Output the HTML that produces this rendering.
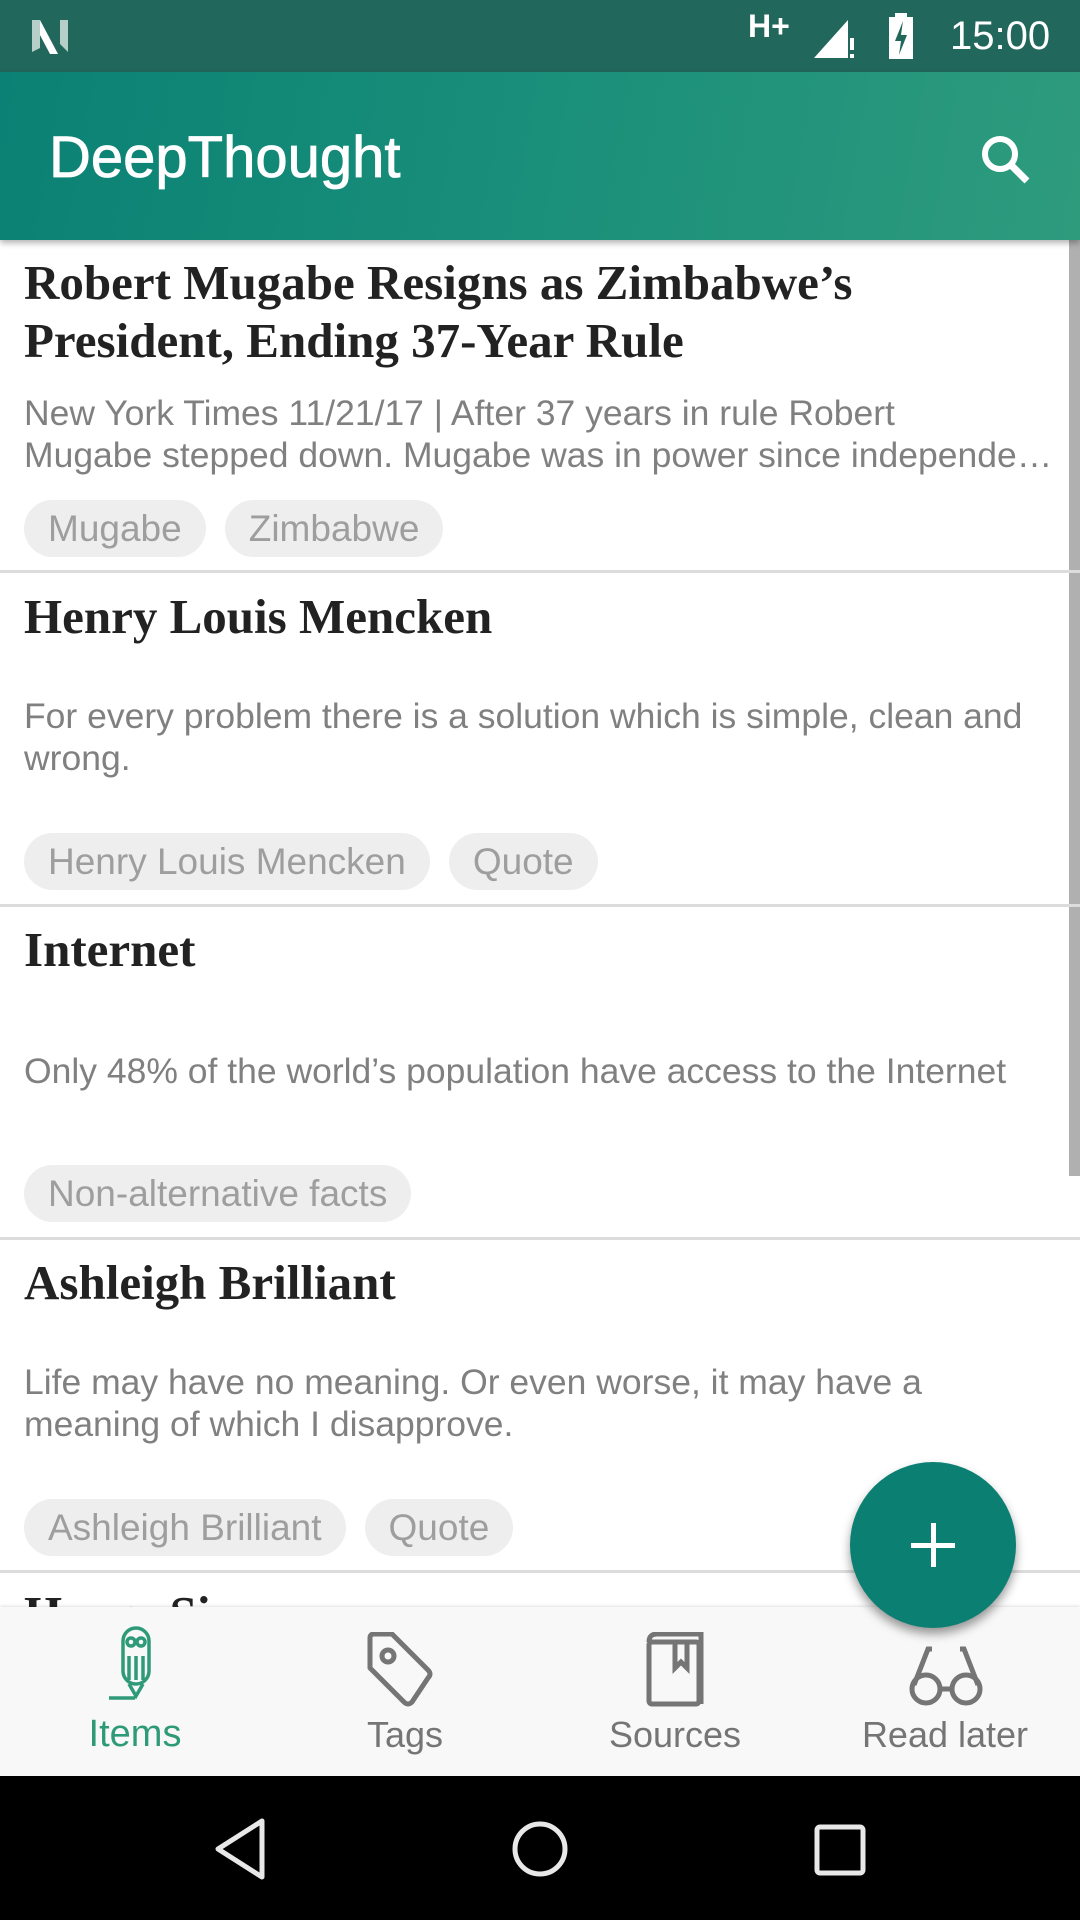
<!DOCTYPE html>
<html><head><meta charset="utf-8"><style>
*{margin:0;padding:0;box-sizing:border-box}
body{width:1080px;height:1920px;position:relative;overflow:hidden;background:#fff;font-family:"Liberation Sans",sans-serif}
.abs{position:absolute}
.status{left:0;top:0;width:1080px;height:72px;background:#22675b}
.appbar{left:0;top:72px;width:1080px;height:168px;background:linear-gradient(100deg,#0a8174 0%,#1a8f7a 50%,#2e9b7d 100%);box-shadow:0 3px 6px rgba(0,0,0,.3);z-index:2}
.title{position:absolute;left:24px;font-family:"Liberation Serif",serif;font-weight:bold;font-size:49px;color:#222;white-space:nowrap;line-height:58px}
.sub{position:absolute;left:24px;font-size:35.5px;color:#808080;line-height:42px;white-space:nowrap}
.chips{position:absolute;left:24px;display:flex;gap:19px}
.chip{height:57px;border-radius:29px;background:#eeeeee;color:#9e9e9e;font-size:37px;line-height:57px;padding:0 24px;white-space:nowrap}
.div{position:absolute;left:0;width:1080px;height:3px;background:#dcdcdc}
.nav{left:0;top:1607px;width:1080px;height:169px;background:#f8f8f8;box-shadow:0 -1px 3px rgba(0,0,0,.12);z-index:3}
.lbl{position:absolute;top:1714px;width:270px;text-align:center;font-size:36px;color:#757575;z-index:4}
</style></head><body>
<div class="abs status"></div>
<svg class="abs" style="left:30px;top:18px;z-index:3" width="48" height="38" viewBox="0 0 48 38"><path d="M2 2h8l18 34h-8z" fill="#fff"/><path d="M2 2v32l8-4V2z" fill="#b6cfc9"/><path d="M30 2h8v32l-8-8z" fill="#b6cfc9"/></svg>
<div class="abs" style="left:748px;top:8px;color:#fff;font-weight:bold;font-size:32px">H+</div>
<svg class="abs" style="left:812px;top:14px" width="46" height="46" viewBox="0 0 46 46"><path d="M2 44L36 6v38z" fill="#fff"/><rect x="38" y="24" width="4" height="12" fill="#fff"/><rect x="38" y="40" width="4" height="4" fill="#fff"/></svg>
<svg class="abs" style="left:888px;top:13px" width="26" height="46" viewBox="0 0 26 46"><path d="M7 0h12v4h6v42H1V4h6z" fill="#fff"/><path d="M15 8l-8 20h6l-2 14 8-20h-6z" fill="#22675b"/></svg>
<div class="abs" style="left:950px;top:14px;color:#fff;font-size:40px">15:00</div>
<div class="abs appbar">
 <div style="position:absolute;left:49px;top:52px;color:#fff;font-size:58px;-webkit-text-stroke:0.8px #fff">DeepThought</div>
 <svg style="position:absolute;left:976px;top:58px" width="60" height="60" viewBox="0 0 60 60"><circle cx="24" cy="24" r="15" stroke="#fff" stroke-width="6" fill="none"/><path d="M35 35l16 16" stroke="#fff" stroke-width="7"/></svg>
</div>
<div class="abs" style="left:1069px;top:240px;width:11px;height:936px;background:#b0b0b0"></div>

<div class="title" style="top:254px">Robert Mugabe Resigns as Zimbabwe’s<br>President, Ending 37-Year Rule</div>
<div class="sub" style="top:392px">New York Times 11/21/17 | After 37 years in rule Robert<br>Mugabe stepped down. Mugabe was in power since independe…</div>
<div class="chips" style="top:500px"><div class="chip">Mugabe</div><div class="chip">Zimbabwe</div></div>
<div class="div" style="top:570px"></div>

<div class="title" style="top:588px">Henry Louis Mencken</div>
<div class="sub" style="top:695px">For every problem there is a solution which is simple, clean and<br>wrong.</div>
<div class="chips" style="top:833px"><div class="chip">Henry Louis Mencken</div><div class="chip">Quote</div></div>
<div class="div" style="top:904px"></div>

<div class="title" style="top:921px">Internet</div>
<div class="sub" style="top:1050px">Only 48% of the world’s population have access to the Internet</div>
<div class="chips" style="top:1165px"><div class="chip">Non-alternative facts</div></div>
<div class="div" style="top:1237px"></div>

<div class="title" style="top:1254px">Ashleigh Brilliant</div>
<div class="sub" style="top:1361px">Life may have no meaning. Or even worse, it may have a<br>meaning of which I disapprove.</div>
<div class="chips" style="top:1499px"><div class="chip">Ashleigh Brilliant</div><div class="chip">Quote</div></div>
<div class="div" style="top:1570px"></div>
<div class="title" style="top:1585px">Henry Si</div>

<div class="abs nav"></div>
<svg class="abs" style="left:105px;top:1626px;z-index:4" width="60" height="80" viewBox="0 0 60 80" fill="none" stroke="#2e9a78" stroke-width="3.5"><rect x="18" y="2" width="26" height="56" rx="13"/><circle cx="26" cy="16" r="4"/><circle cx="36" cy="16" r="4"/><path d="M24 30v24M31 30v24M38 30v24M24 58l7 12 7-12M4 72h26"/></svg>
<svg class="abs" style="left:366px;top:1632px;z-index:4" width="76" height="76" viewBox="0 0 76 76" fill="none" stroke="#757575" stroke-width="5"><path d="M4 6q0-4 4-4h18l36 36q4 4 0 8L46 70q-4 4-8 0L4 36z" stroke-linejoin="round"/><circle cx="22" cy="24" r="6"/></svg>
<svg class="abs" style="left:645px;top:1632px;z-index:4" width="60" height="76" viewBox="0 0 60 76" fill="none" stroke="#757575" stroke-width="5"><rect x="4" y="10" width="50" height="62" rx="3"/><path d="M4 10q0-8 8-8h44v70M30 12v24l6-6 6 6V12"/></svg>
<svg class="abs" style="left:908px;top:1645px;z-index:4" width="76" height="62" viewBox="0 0 76 62" fill="none" stroke="#757575" stroke-width="5"><circle cx="18" cy="44" r="14"/><circle cx="58" cy="44" r="14"/><path d="M32 44h12M6 40L20 4h4M70 40L56 4h-4"/></svg>
<div class="lbl" style="left:0;color:#2e9a78;font-size:38px;top:1713px">Items</div>
<div class="lbl" style="left:270px">Tags</div>
<div class="lbl" style="left:540px">Sources</div>
<div class="lbl" style="left:810px">Read later</div>

<div class="abs" style="left:850px;top:1462px;width:166px;height:166px;border-radius:50%;background:#0b7f72;box-shadow:0 6px 10px rgba(0,0,0,.4);z-index:5">
 <div style="position:absolute;left:61px;top:81px;width:44px;height:5px;background:#fff"></div>
 <div style="position:absolute;left:81px;top:61px;width:5px;height:44px;background:#fff"></div>
</div>

<div class="abs" style="left:0;top:1776px;width:1080px;height:144px;background:#000"></div>
<svg class="abs" style="left:210px;top:1817px" width="60" height="64" viewBox="0 0 60 64" fill="none" stroke="#e8e8e8" stroke-width="5" stroke-linejoin="round"><path d="M52 4v56L8 32z"/></svg>
<svg class="abs" style="left:510px;top:1819px" width="60" height="60"><circle cx="30" cy="30" r="25" stroke="#e8e8e8" stroke-width="5" fill="none"/></svg>
<svg class="abs" style="left:813px;top:1823px" width="54" height="54"><rect x="4" y="4" width="46" height="46" rx="3" stroke="#e8e8e8" stroke-width="5" fill="none"/></svg>
</body></html>
